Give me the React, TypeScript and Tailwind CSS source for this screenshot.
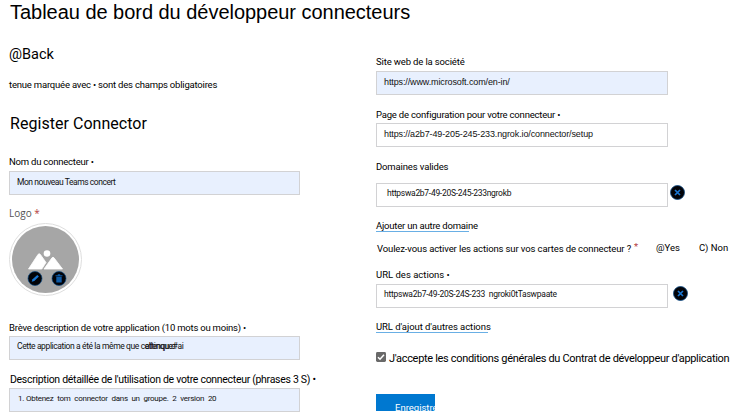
import type { ReactNode } from "react";

function Line({ className, children }: { className: string; children: ReactNode }) {
  return <div className={`flex items-center whitespace-pre leading-none text-black ${className}`}>{children}</div>;
}

function Field({ className, children }: { className: string; children: ReactNode }) {
  return (
    <div className={`flex h-6 shrink-0 items-center whitespace-pre border border-[#d2d2d4] leading-none text-[#111] ${className}`}>
      {children}
    </div>
  );
}

function RemoveIcon() {
  return (
    <svg width="15" height="15" viewBox="0 0 15 15" className="shrink-0">
      <circle cx="7.5" cy="7.5" r="7" fill="#020308" stroke="#0a4a86" strokeWidth=".8" />
      <path d="M5 5l5 5M10 5l-5 5" stroke="#1976d2" strokeWidth="1.7" />
    </svg>
  );
}

function Logo() {
  return (
    <svg width="73" height="73" viewBox="0 0 73 73">
      <circle cx="36.5" cy="36.5" r="36" fill="#fff" stroke="#dedede" />
      <circle cx="36.5" cy="36.5" r="33.5" fill="#a6a6a6" />
      <circle cx="38" cy="30.5" r="3.3" fill="#fff" />
      <path d="M19.5 46L29 31.5q1.2-1.6 2.4 0L37 39.5 32.8 46z" fill="#fff" stroke="#fff" strokeWidth=".8" strokeLinejoin="round" />
      <path d="M35 46l8-11.2q1-1.2 2 0L53.5 46z" fill="#fff" stroke="#fff" strokeWidth=".8" strokeLinejoin="round" />
      <circle cx="26" cy="55.5" r="7" fill="#020308" stroke="#0b4a85" strokeWidth=".7" />
      <path d="M22.7 58.8l.8-2.6 4.8-4.3 1.6 1.6-4.6 4.6z" fill="#1976d2" />
      <circle cx="50" cy="55.5" r="7" fill="#020308" stroke="#0b4a85" strokeWidth=".7" />
      <path d="M46.5 52.3h7v1h-7zM48.8 51.3h2.4v1h-2.4zM47.3 53.8h5.4v5.7h-5.4z" fill="#0f5ca8" />
    </svg>
  );
}

export default function App() {
  return (
    <div className="h-[420px] w-[744px] overflow-hidden bg-white font-['Roboto','Liberation_Sans',sans-serif]">
      <Line className="h-6 pl-[10px] font-['Liberation_Sans',sans-serif] text-[20px] tracking-[-0.03px]"><span>Tableau de bord du développeur connecteurs</span></Line>
      <div className="flex">
        <div className="flex w-[367px] flex-col pl-[9px]">
          <Line className="mt-[21px] h-5 text-[14.5px]"><span>@Back</span></Line>
          <Line className="mt-[10px] h-5 text-[9.5px] tracking-[-0.2px]"><span>tenue marquée avec • sont des champs obligatoires</span></Line>
          <Line className="mt-[19px] h-5 pl-px text-[16px] tracking-[0.04px]"><span>Register Connector</span></Line>
          <Line className="mt-[18px] h-5 text-[9.5px] tracking-[-0.22px]"><span>Nom du connecteur •</span></Line>
          <Field className="mt-[-1px] w-[291px] bg-[#e8f0fe] pb-[2px] pl-[7px] text-[8.5px] tracking-[-0.45px]"><span>Mon nouveau Teams concert</span></Field>
          <Line className="mt-[8px] h-5 font-['Open_Sans',sans-serif] text-[10px] text-[#555]">
            <span className="text-[#555]">Logo <span className="text-[#b33c3c]">*</span></span>
          </Line>
          <div className="h-[73px]"><Logo /></div>
          <Line className="mt-[22px] h-5 text-[9.5px] tracking-[-0.21px]"><span>Brève description de votre application (10 mots ou moins) •</span></Line>
          <Field className="mt-[-2px] w-[291px] bg-[#e8f0fe] pb-[3px] pl-[7px] text-[8.5px] tracking-[-0.39px]">
            <span>Cette application a été la même que c</span>
            <span className="relative">attinque#ai<span className="absolute left-0 top-0">ellenqu:c</span></span>
          </Field>
          <Line className="mt-[10px] h-5 pl-px text-[10.5px] tracking-[-0.3px]"><span>Description détaillée de l'utilisation de votre connecteur (phrases 3 S) •</span></Line>
          <Field className="mt-[-2px] w-[291px] bg-[#e8f0fe] pb-[2px] pl-[8px] text-[8px] tracking-[-0.27px] [word-spacing:0.15px]"><span>1. Obtenez  tom  connector  dans  un  groupe.  2  version  20</span></Field>
        </div>
        <div className="flex w-[377px] flex-col pl-[9px]">
          <Line className="mt-[28px] h-5 text-[9.5px] tracking-[-0.14px]"><span>Site web de la société</span></Line>
          <Field className="mt-[-1px] w-[292px] bg-[#e8f0fe] pb-[2px] pl-[7px] font-['Liberation_Sans',sans-serif] text-[9px] tracking-[-0.12px]"><span>https://www.microsoft.com/en-in/</span></Field>
          <Line className="mt-[10px] h-5 text-[9.5px] tracking-[-0.2px]"><span>Page de configuration pour votre connecteur •</span></Line>
          <Field className="mt-[-2px] w-[292px] pb-[2px] pl-[7px] font-['Liberation_Sans',sans-serif] text-[9px] tracking-[-0.12px]"><span>https://a2b7-49-205-245-233.ngrok.io/connector/setup</span></Field>
          <Line className="mt-[10px] h-5 text-[9.5px] tracking-[-0.14px]"><span>Domaines valides</span></Line>
          <div className="mt-[6px] flex gap-[2px]">
            <Field className="w-[292px] pb-[3px] pl-[10px] text-[8.5px] tracking-[-0.29px]"><span>httpswa2b7-49-20S-245-233ngrokb</span></Field>
            <div className="pt-[2px]"><RemoveIcon /></div>
          </div>
          <Line className="mt-[9px] h-5 text-[9.5px] tracking-[-0.2px]"><span>Ajouter un autre domaine</span></Line>
          <div className="mt-[-5px] h-px w-[93px] bg-[#69afe5]" />
          <Line className="mt-[7px] h-5 pl-px text-[9.5px]">
            <span className="w-[257px] tracking-[-0.12px]">Voulez-vous activer les actions sur vos cartes de connecteur ?</span>
            <span className="w-[22px] pb-1 text-[#b33c3c]">*</span>
            <span className="w-[43px] pb-[2px]">@Yes</span>
            <span className="pb-[2px]">C) Non</span>
          </Line>
          <Line className="mt-[6px] h-5 text-[9.5px]"><span>URL des actions •</span></Line>
          <div className="mt-[-1px] flex gap-[5px]">
            <Field className="w-[292px] pb-[3px] pl-[7px] text-[8.5px] tracking-[-0.25px]"><span>httpswa2b7-49-20S-24S-233  ngroki0tTaswpaate</span></Field>
            <div className="pt-[2px]"><RemoveIcon /></div>
          </div>
          <Line className="mt-[9px] h-5 text-[9.5px] tracking-[-0.07px]"><span>URL d'ajout d'autres actions</span></Line>
          <div className="mt-[-5px] h-px w-[112px] bg-[#69afe5]" />
          <Line className="mt-[15px] h-5 text-[11px] tracking-[-0.32px]">
            <svg width="10" height="10" viewBox="0 0 10 10" className="mb-[2px] mr-[3px] shrink-0">
              <rect width="10" height="10" rx="1.4" fill="#696969" />
              <path d="M2 5.2l2 2L8 2.7" fill="none" stroke="#fff" strokeWidth="1.5" />
            </svg>
            <span>J'accepte les conditions générales du Contrat de développeur d'application</span>
          </Line>
          <div className="mt-[26px] h-[17px] w-[59px] overflow-hidden whitespace-pre bg-[#0078d0] pl-[19px] pt-[9px] text-[9.5px] leading-none text-white"><span>Enregistre</span></div>
        </div>
      </div>
    </div>
  );
}
